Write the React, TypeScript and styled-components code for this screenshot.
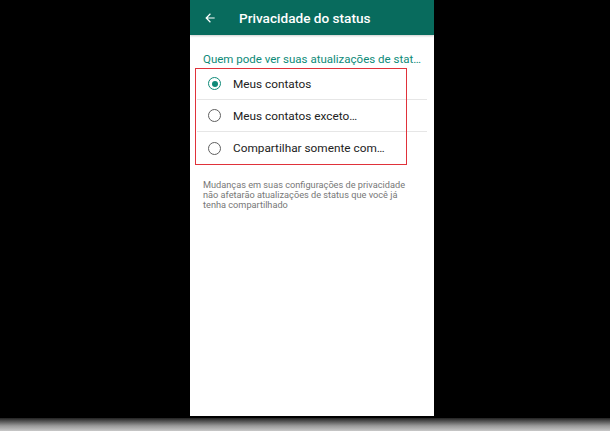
import React from 'react';
import styled, { createGlobalStyle } from 'styled-components';

const GlobalStyle = createGlobalStyle`
  html, body {
    margin: 0;
    padding: 0;
    background: #000;
  }
  body {
    font-family: Roboto, "Noto Sans", "Liberation Sans", sans-serif;
    width: 610px;
    height: 431px;
    overflow: hidden;
  }
`;

const options = [
  { label: 'Meus contatos', checked: true },
  { label: 'Meus contatos exceto…', checked: false },
  { label: 'Compartilhar somente com…', checked: false },
];

export default function App() {
  return (
    <>
      <GlobalStyle />
      <Page>
        <Stage>
          <Screen>
            <Header>
              <BackArrow viewBox="0 0 24 24">
                <path d="M20 11H7.83l5.59-5.59L12 4l-8 8 8 8 1.41-1.41L7.83 13H20v-2z" fill="#fff" />
              </BackArrow>
              <Title>Privacidade do status</Title>
            </Header>
            <SectionLabel>Quem pode ver suas atualizações de stat…</SectionLabel>
            <OptionList>
              {options.map((o, i) => (
                <OptionRow key={o.label} last={i === options.length - 1}>
                  <Radio checked={o.checked} />
                  <OptionText>{o.label}</OptionText>
                </OptionRow>
              ))}
              <Highlight />
            </OptionList>
            <Note>
              Mudanças em suas configurações de privacidade não afetarão atualizações de status que você já
              tenha compartilhado
            </Note>
          </Screen>
        </Stage>
        <BottomFade />
      </Page>
    </>
  );
}

const Page = styled.div`
  width: 610px;
  height: 431px;
  display: flex;
  flex-direction: column;
  background: #000;
`;

const Stage = styled.div`
  height: 418px;
  display: flex;
  padding-left: 190px;
`;

const Screen = styled.div`
  width: 244px;
  height: 416px;
  background: #fff;
  display: flex;
  flex-direction: column;
`;

const Header = styled.div`
  height: 35px;
  background: #086b5d;
  display: flex;
  align-items: center;
  padding-left: 13px;
  gap: 22px;
  box-shadow: 0 1px 2px rgba(0, 0, 0, 0.2);
`;

const BackArrow = styled.svg`
  width: 14px;
  height: 14px;
`;

const Title = styled.div`
  color: #fff;
  font-size: 13.6px;
  font-weight: 500;
`;

const SectionLabel = styled.div`
  margin-top: 17px;
  padding-left: 13px;
  color: #0d8a78;
  font-size: 11.5px;
  line-height: 14px;
  white-space: nowrap;
`;

const OptionList = styled.div`
  position: relative;
  margin-top: 2px;
  display: flex;
  flex-direction: column;
`;

const OptionRow = styled.div<{ last: boolean }>`
  height: 32px;
  display: flex;
  align-items: center;
  margin-left: 7px;
  margin-right: 7px;
  padding-left: 11px;
  gap: 12px;
  border-bottom: ${(p) => (p.last ? 'none' : '1px solid #e6e6e6')};
  box-sizing: border-box;
`;

const Radio = styled.span<{ checked: boolean }>`
  width: 13px;
  height: 13px;
  box-sizing: border-box;
  border-radius: 50%;
  border: 1.6px solid ${(p) => (p.checked ? '#0e8a78' : '#5f5f5f')};
  display: flex;
  align-items: center;
  justify-content: center;
  flex-shrink: 0;

  &::after {
    content: '';
    width: 6px;
    height: 6px;
    border-radius: 50%;
    background: #0e8a78;
    display: ${(p) => (p.checked ? 'block' : 'none')};
  }
`;

const OptionText = styled.span`
  color: #222;
  font-size: 11.8px;
`;

const Highlight = styled.div`
  position: absolute;
  left: 5px;
  top: 0;
  width: 212px;
  height: 97px;
  border: 1.5px solid #e0323a;
  box-sizing: border-box;
  pointer-events: none;
`;

const Note = styled.div`
  margin-top: 16px;
  padding-left: 13px;
  padding-right: 14px;
  color: #777;
  font-size: 9.2px;
  line-height: 10px;
`;

const BottomFade = styled.div`
  flex: 1;
  background: linear-gradient(to bottom, #222 0%, #999 60%, #c8c8c8 100%);
`;
